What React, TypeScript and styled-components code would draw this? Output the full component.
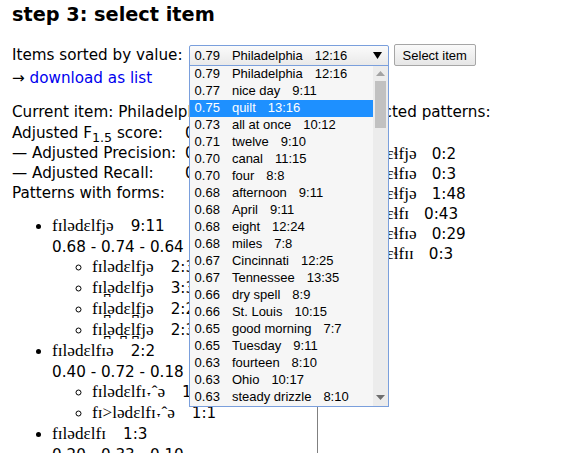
import styled, { createGlobalStyle } from 'styled-components';

const GlobalStyle = createGlobalStyle`
  body {
    margin: 0;
    background: #ffffff;
    color: #000000;
    font-family: "DejaVu Sans", sans-serif;
    font-size: 15.2px;
  }
`;

const options = [
  ['0.79', 'Philadelphia', '12:16'],
  ['0.77', 'nice day', '9:11'],
  ['0.75', 'quilt', '13:16'],
  ['0.73', 'all at once', '10:12'],
  ['0.71', 'twelve', '9:10'],
  ['0.70', 'canal', '11:15'],
  ['0.70', 'four', '8:8'],
  ['0.68', 'afternoon', '9:11'],
  ['0.68', 'April', '9:11'],
  ['0.68', 'eight', '12:24'],
  ['0.68', 'miles', '7:8'],
  ['0.67', 'Cincinnati', '12:25'],
  ['0.67', 'Tennessee', '13:35'],
  ['0.66', 'dry spell', '8:9'],
  ['0.66', 'St. Louis', '10:15'],
  ['0.65', 'good morning', '7:7'],
  ['0.65', 'Tuesday', '9:11'],
  ['0.63', 'fourteen', '8:10'],
  ['0.63', 'Ohio', '10:17'],
  ['0.63', 'steady drizzle', '8:10'],
];

type Pattern = { form: string; count: string; scores?: string; forms?: [string, string][] };

const patterns: Pattern[] = [
  {
    form: 'fɪlədɛlfjə',
    count: '9:11',
    scores: '0.68 - 0.74 - 0.64',
    forms: [
      ['fɪlədɛlfjə', '2:3'],
      ['fɪl̪ədɛlfjə', '3:3'],
      ['fɪl̪ədɛl̪fjə', '2:2'],
      ['fɪl̪əd̪ɛl̪fjə', '2:3'],
    ],
  },
  {
    form: 'fɪlədɛlfɪə',
    count: '2:2',
    scores: '0.40 - 0.72 - 0.18',
    forms: [
      ['fɪlədɛlfɪ˕ˆə', '1:1'],
      ['fɪ˃lədɛlfɪ˕ˆə', '1:1'],
    ],
  },
  { form: 'fɪlədɛlfɪ', count: '1:3', scores: '0.20 - 0.33 - 0.10' },
];

const selected = [
  ['fɪlədɛɬfjə', '0:2'],
  ['fɪlədɛɬfɪə', '0:3'],
  ['fɪlədɛɬfjə', '1:48'],
  ['fɪlədɛɬfɪ', '0:43'],
  ['fɪlədɛɬfɪə', '0:29'],
  ['fɪlədɛɬfɪɪ', '0:3'],
];

export default function App() {
  return (
    <Page>
      <GlobalStyle />
      <Title>step 3: select item</Title>
      <SortRow>
        Items sorted by value:
        <SelectWrap>
          <SelectBox>
            <OptionText>
              <span>0.79</span>
              <span>Philadelphia</span>
              <span>12:16</span>
            </OptionText>
            <svg width="9" height="7" viewBox="0 0 9 7">
              <polygon points="0,0 9,0 4.5,7" fill="#000" />
            </svg>
          </SelectBox>
          <Popup>
            <OptionList>
              {options.map((o, i) => (
                <OptionRow key={i} $active={i === 2}>
                  <span>{o[0]}</span>
                  <span>{o[1]}</span>
                  <span>{o[2]}</span>
                </OptionRow>
              ))}
            </OptionList>
            <ScrollTrack>
              <svg width="9" height="5" viewBox="0 0 9 5">
                <polygon points="0,5 9,5 4.5,0" fill="#a3a3a3" />
              </svg>
              <Thumb />
              <TrackFill />
              <svg width="9" height="5" viewBox="0 0 9 5">
                <polygon points="0,0 9,0 4.5,5" fill="#6e6e6e" />
              </svg>
            </ScrollTrack>
          </Popup>
        </SelectWrap>
        <Button>Select item</Button>
      </SortRow>
      <LinkRow>
        → <Link href="#">download as list</Link>
      </LinkRow>
      <Columns>
        <LeftCol>
          <Line>Current item: Philadelphia&nbsp;&nbsp;&nbsp;12:16</Line>
          <ScoreGrid>
            <ScoreLabel $tall>
              Adjusted F<Sub>1.5</Sub> score:
            </ScoreLabel>
            <ScoreLabel $tall>0.79</ScoreLabel>
            <ScoreLabel>— Adjusted Precision:</ScoreLabel>
            <ScoreLabel>0.74</ScoreLabel>
            <ScoreLabel>— Adjusted Recall:</ScoreLabel>
            <ScoreLabel>0.82</ScoreLabel>
          </ScoreGrid>
          <Line>Patterns with forms:</Line>
          <List>
            {patterns.map((p, i) => (
              <Item key={i}>
                <FormLine>
                  <Ipa>{p.form}</Ipa>
                  <Count>{p.count}</Count>
                </FormLine>
                {p.scores && <Line>{p.scores}</Line>}
                {p.forms && (
                  <SubList>
                    {p.forms.map((f, j) => (
                      <Item key={j}>
                        <FormLine>
                          <Ipa>{f[0]}</Ipa>
                          <Count>{f[1]}</Count>
                        </FormLine>
                      </Item>
                    ))}
                  </SubList>
                )}
              </Item>
            ))}
          </List>
        </LeftCol>
        <RightCol>
          <Line>Selected patterns:</Line>
          <RightList>
            {selected.map((s, i) => (
              <RightLine key={i}>
                <Ipa>{s[0]}</Ipa>
                <Count $gap={15}>{s[1]}</Count>
              </RightLine>
            ))}
          </RightList>
        </RightCol>
      </Columns>
    </Page>
  );
}

const Page = styled.div`
  padding: 4px 0 0 12px;
`;

const Title = styled.h3`
  margin: 0;
  font-size: 19.3px;
  line-height: 22px;
  font-weight: bold;
`;

const SortRow = styled.div`
  display: flex;
  align-items: center;
  height: 22px;
  margin-top: 18px;
  line-height: 20px;
`;

const SelectWrap = styled.div`
  position: relative;
  margin-left: 6px;
`;

const SelectBox = styled.div`
  box-sizing: border-box;
  width: 200px;
  height: 21px;
  display: flex;
  align-items: center;
  justify-content: space-between;
  padding: 0 6px 0 5px;
  border: 1px solid #7a9fdc;
  border-radius: 2px 2px 0 0;
  background: linear-gradient(#fbfbfb, #e9e9e9);
`;

const OptionText = styled.div`
  display: flex;
  gap: 12px;
  font-family: "Liberation Sans", Arial, sans-serif;
  font-size: 13px;
  line-height: 15px;
`;

const Popup = styled.div`
  position: absolute;
  top: 20px;
  left: 0;
  z-index: 10;
  box-sizing: border-box;
  width: 200px;
  display: flex;
  border: 1px solid #7a9fdc;
  background: #f6f6f6;
`;

const OptionList = styled.div`
  flex: 1;
  display: flex;
  flex-direction: column;
`;

const OptionRow = styled.div<{ $active: boolean }>`
  display: flex;
  gap: 12px;
  height: 17px;
  align-items: center;
  padding-left: 5px;
  font-family: "Liberation Sans", Arial, sans-serif;
  font-size: 13px;
  color: ${(p) => (p.$active ? '#ffffff' : '#000000')};
  background: ${(p) => (p.$active ? '#1e90ff' : 'transparent')};
`;

const ScrollTrack = styled.div`
  width: 15px;
  display: flex;
  flex-direction: column;
  align-items: center;
  background: #ececec;
  padding: 5px 0 6px;
  gap: 5px;
`;

const Thumb = styled.div`
  width: 11px;
  height: 47px;
  background: #c1c1c1;
`;

const TrackFill = styled.div`
  flex: 1;
`;

const Button = styled.button`
  margin-left: 5px;
  height: 22px;
  padding: 0 8px;
  font-family: "Liberation Sans", Arial, sans-serif;
  font-size: 13px;
  color: #000;
  border: 1px solid #a6a6a6;
  border-radius: 2px;
  background: linear-gradient(#fafafa, #e6e6e6);
`;

const LinkRow = styled.div`
  margin-top: 2px;
  line-height: 20px;
`;

const Link = styled.a`
  color: #0000ee;
  text-decoration: none;
`;

const Columns = styled.div`
  display: flex;
  margin-top: 14px;
`;

const LeftCol = styled.div`
  width: 305px;
  border-right: 1px solid #808080;
`;

const RightCol = styled.div`
  padding-left: 33px;
`;

const Line = styled.div`
  line-height: 20px;
  white-space: nowrap;
`;

const ScoreGrid = styled.div`
  display: grid;
  grid-template-columns: 173px auto;
  white-space: nowrap;
`;

const ScoreLabel = styled.span<{ $tall?: boolean }>`
  height: ${(p) => (p.$tall ? '21px' : '20px')};
  line-height: ${(p) => (p.$tall ? '23px' : '20px')};
`;

const Sub = styled.sub`
  font-size: 0.83em;
  line-height: 0;
`;

const List = styled.ul`
  margin: 13px 0 0;
  padding-left: 40px;
  list-style: disc;
`;

const SubList = styled.ul`
  margin: 0;
  padding-left: 40px;
  list-style: circle;
`;

const RightList = styled.div`
  margin-top: 22px;
  padding-left: 4px;
`;

const Item = styled.li``;

const FormLine = styled.div`
  height: 21px;
  line-height: 21px;
  white-space: nowrap;
`;

const RightLine = styled.div`
  height: 20px;
  line-height: 20px;
  white-space: nowrap;
`;

const Ipa = styled.span`
  font-family: "Liberation Serif", "DejaVu Serif", serif;
  font-size: 17.2px;
  line-height: 0;
`;

const Count = styled.span<{ $gap?: number }>`
  margin-left: ${(p) => p.$gap ?? 17}px;
`;
